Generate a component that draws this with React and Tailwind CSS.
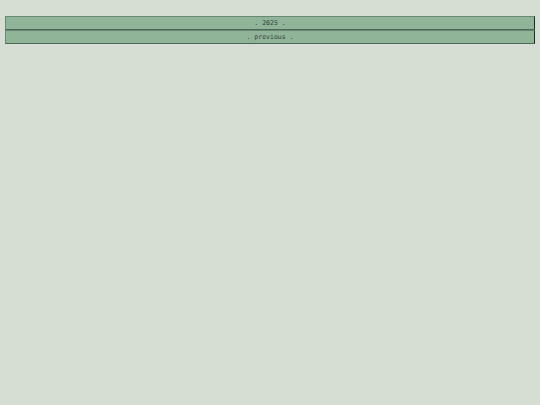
export default function App() {
  const rows = [". 2025 .", ". previous ."];
  return (
    <div className="min-h-[405px] w-full bg-[#d6ddd2] px-[5px] pt-4 font-['DejaVu_Sans_Mono',monospace]">
      <div className="flex flex-col">
        {rows.map((r) => (
          <div
            key={r}
            className="flex h-[14px] items-center justify-center border-t border-l border-r border-b border-t-[#6a8874] border-l-[#6a8874] border-r-[#1e2c24] border-b-[#4c6657] bg-[#90b498] text-[6.5px] leading-none text-[#33423a]"
          >
            {r}
          </div>
        ))}
      </div>
    </div>
  );
}
